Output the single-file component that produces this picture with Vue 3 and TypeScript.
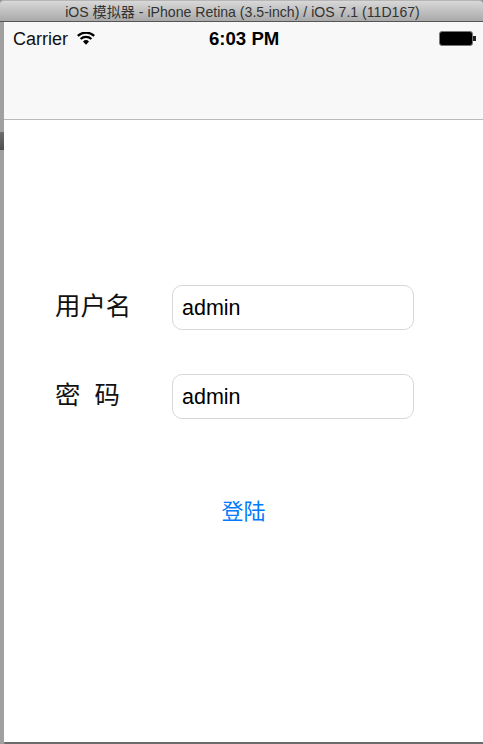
<template>
  <div class="window">
    <div class="titlebar">iOS 模拟器 - iPhone Retina (3.5-inch) / iOS 7.1 (11D167)</div>
    <div class="body">
      <div class="edge">
        <div class="edge-top"></div>
        <div class="edge-dark"></div>
        <div class="edge-rest"></div>
      </div>
      <div class="screen">
        <div class="navbar">
          <div class="status">
            <div class="status-left">
              <span class="carrier">Carrier</span>
              <svg class="wifi" width="18" height="13" viewBox="0 0 18 13">
                <path d="M9 12.8 6 9.5a4.3 4.3 0 0 1 6 0Z" fill="#000" />
                <path d="M3.6 7a7.8 7.8 0 0 1 10.8 0" fill="none" stroke="#000" stroke-width="2.2" />
                <path d="M.8 3.9a11.8 11.8 0 0 1 16.4 0" fill="none" stroke="#000" stroke-width="2.2" />
              </svg>
            </div>
            <span class="time">6:03 PM</span>
            <div class="battery">
              <div class="battery-body"></div>
              <div class="battery-tip"></div>
            </div>
          </div>
        </div>
        <div class="content">
          <div v-for="row in rows" :key="row.label" class="row">
            <label class="label">{{ row.label }}</label>
            <input class="field" type="text" :value="row.value" readonly />
          </div>
          <button class="login" type="button">登陆</button>
        </div>
      </div>
    </div>
  </div>
</template>

<script setup lang="ts">
interface Row {
  label: string
  value: string
}

const rows: Row[] = [
  { label: '用户名', value: 'admin' },
  { label: '密  码', value: 'admin' },
]
</script>

<style>
html,
body {
  margin: 0;
  background: #fff;
  overflow: hidden;
}
</style>

<style scoped>
.window {
  width: 483px;
  height: 744px;
  display: flex;
  flex-direction: column;
  background: #8f8f8f;
  font-family: "Liberation Sans", "Noto Sans CJK SC", sans-serif;
}

.titlebar {
  height: 22px;
  flex: none;
  box-sizing: border-box;
  padding-top: 3px;
  padding-left: 2px;
  border-top: 1px solid #b5b5b5;
  border-radius: 4px 4px 0 0;
  border-bottom: 1px solid #555;
  background: linear-gradient(#d8d8d8, #a9a9a9);
  text-align: center;
  font-size: 14.1px;
  line-height: 16px;
  color: #333;
  white-space: nowrap;
}

.body {
  flex: 1;
  display: flex;
  min-height: 0;
}

.edge {
  width: 4px;
  flex: none;
  display: flex;
  flex-direction: column;
  background: #a0a0a0;
}

.edge-top {
  height: 110px;
  flex: none;
}

.edge-dark {
  height: 18px;
  flex: none;
  background: linear-gradient(#6e6e6e, #4f4f4f);
}

.edge-rest {
  flex: 1;
}

.screen {
  flex: 1;
  display: flex;
  flex-direction: column;
  background: #fff;
  border-bottom: 2px solid #6b6b6b;
  border-bottom-left-radius: 2px;
}

.navbar {
  height: 98px;
  flex: none;
  box-sizing: border-box;
  background: #f8f8f8;
  border-bottom: 1px solid #b9b9b9;
}

.status {
  height: 33px;
  display: flex;
  align-items: center;
  justify-content: space-between;
  position: relative;
  padding: 0 7px 0 9px;
}

.status-left {
  display: flex;
  align-items: center;
  gap: 9px;
}

.carrier {
  font-size: 18px;
  line-height: 34px;
  color: #111;
}

.wifi {
  margin-top: -1px;
}

.time {
  position: absolute;
  left: 205px;
  top: 6px;
  font-size: 18.6px;
  line-height: 22px;
  font-weight: 700;
  color: #000;
}

.battery {
  display: flex;
  align-items: center;
}

.battery-body {
  width: 32px;
  height: 13px;
  background: #000;
  border: 1px solid #777;
  border-radius: 3px;
}

.battery-tip {
  width: 3px;
  height: 5px;
  background: #222;
}

.content {
  flex: 1;
  display: flex;
  flex-direction: column;
  padding-top: 165px;
}

.row {
  display: flex;
  align-items: center;
  height: 45px;
  margin-bottom: 44px;
}

.label {
  width: 168px;
  box-sizing: border-box;
  padding-left: 51px;
  padding-bottom: 3px;
  font-size: 25.4px;
  line-height: 32px;
  color: #111;
  white-space: pre;
}

.field {
  width: 242px;
  height: 45px;
  box-sizing: border-box;
  padding: 2px 9px 0;
  border: 1px solid #d8d8d8;
  border-radius: 10px;
  outline: none;
  background: #fff;
  font-family: inherit;
  font-size: 21.5px;
  color: #000;
}

.login {
  align-self: center;
  margin-top: 34px;
  padding: 0;
  border: none;
  background: none;
  font-family: inherit;
  font-size: 22px;
  line-height: 30px;
  color: #007aff;
}
</style>
